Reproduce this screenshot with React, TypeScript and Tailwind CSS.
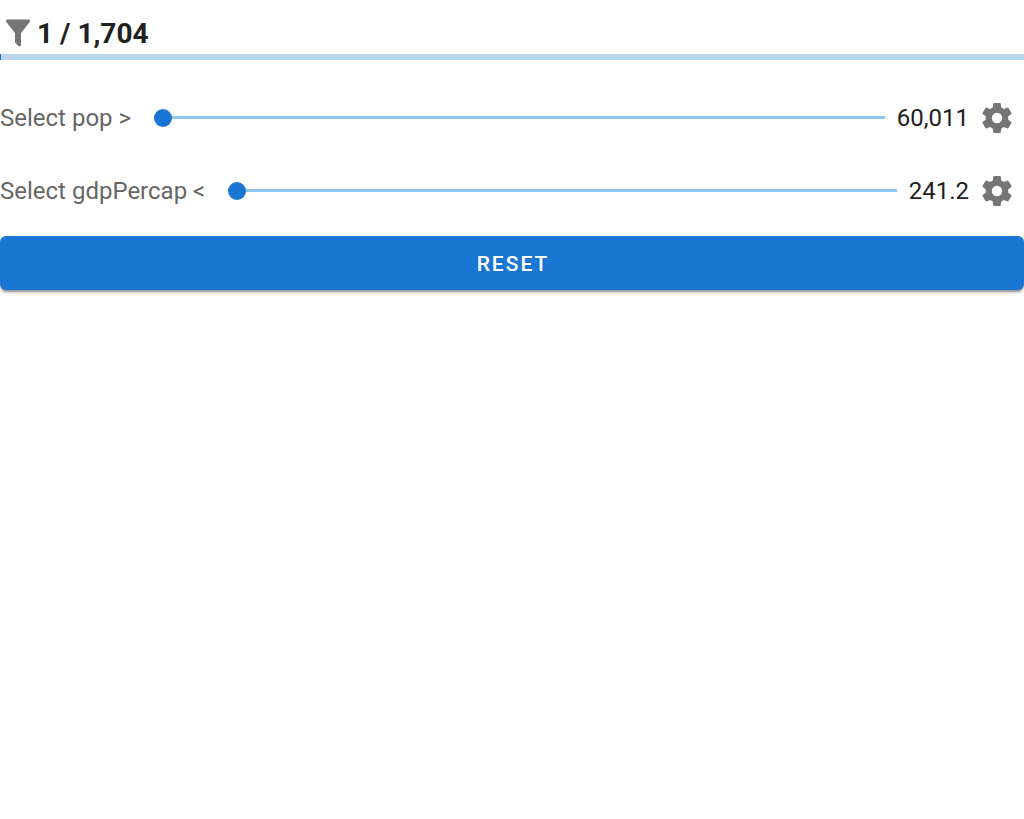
import { useState } from 'react'

const FILTER_PATH =
  'M14,12V19.88C14.04,20.18 13.94,20.5 13.71,20.71C13.32,21.1 12.69,21.1 12.3,20.71L10.29,18.7C10.06,18.47 9.96,18.16 10,17.87V12H9.97L4.21,4.62C3.87,4.19 3.95,3.56 4.38,3.22C4.57,3.08 4.78,3 5,3V3H19C19.22,3 19.43,3.08 19.62,3.22C20.05,3.56 20.13,4.19 19.79,4.62L14.03,12H14Z'

const COG_PATH =
  'M12,15.5A3.5,3.5 0 0,1 8.5,12A3.5,3.5 0 0,1 12,8.5A3.5,3.5 0 0,1 15.5,12A3.5,3.5 0 0,1 12,15.5M19.43,12.97C19.47,12.65 19.5,12.33 19.5,12C19.5,11.67 19.47,11.34 19.43,11L21.54,9.37C21.73,9.22 21.78,8.95 21.66,8.73L19.66,5.27C19.54,5.05 19.27,4.96 19.05,5.05L16.56,6.05C16.04,5.66 15.5,5.32 14.87,5.07L14.5,2.42C14.46,2.18 14.25,2 14,2H10C9.75,2 9.54,2.18 9.5,2.42L9.13,5.07C8.5,5.32 7.96,5.66 7.44,6.05L4.95,5.05C4.73,4.96 4.46,5.05 4.34,5.27L2.34,8.73C2.21,8.95 2.27,9.22 2.46,9.37L4.57,11C4.53,11.34 4.5,11.67 4.5,12C4.5,12.33 4.53,12.65 4.57,12.97L2.46,14.63C2.27,14.78 2.21,15.05 2.34,15.27L4.34,18.73C4.46,18.95 4.73,19.03 4.95,18.95L7.44,17.94C7.96,18.34 8.5,18.68 9.13,18.93L9.5,21.58C9.54,21.82 9.75,22 10,22H14C14.25,22 14.46,21.82 14.5,21.58L14.87,18.93C15.5,18.67 16.04,18.34 16.56,17.94L19.05,18.95C19.27,19.03 19.54,18.95 19.66,18.73L21.66,15.27C21.78,15.05 21.73,14.78 21.54,14.63L19.43,12.97Z'

const TOTAL = 1704
const MATCHED = 1

const filters = [
  { id: 'pop', label: 'Select pop >', min: 60011, max: 1318683096, step: 1 },
  { id: 'gdpPercap', label: 'Select gdpPercap <', min: 241.2, max: 113523.2, step: 0.1 },
]

const initialValues = filters.map((filter) => filter.min)

function Icon({ path }: { path: string }) {
  return (
    <svg viewBox="0 0 24 24" className="size-9 shrink-0 fill-[#757575]" aria-hidden="true">
      <path d={path} />
    </svg>
  )
}

export default function App() {
  const [values, setValues] = useState(initialValues)

  const handleChange = (index: number, value: number) => {
    setValues(values.map((v, i) => (i === index ? value : v)))
  }

  return (
    <main className="min-h-screen bg-white font-[Roboto,sans-serif] text-[#212121]">
      <div className="flex h-[54px] items-end pb-[3px]">
        <Icon path={FILTER_PATH} />
        <p className="pl-px text-[28px] leading-[34px] font-bold">
          {MATCHED.toLocaleString('en-US')} / {TOTAL.toLocaleString('en-US')}
        </p>
      </div>

      {/* Share of rows that pass the filters */}
      <div
        role="progressbar"
        aria-label="Filtered rows"
        aria-valuenow={MATCHED}
        aria-valuemax={TOTAL}
        className="h-1.5 bg-[#bad6ee]"
      >
        <div className="h-full bg-[#1976d2]" style={{ width: `${(MATCHED / TOTAL) * 100}%` }} />
      </div>

      <div className="pt-[21px] pb-[9px]">
        {filters.map((filter, index) => (
          <div key={filter.id} className="flex h-[73px] items-center pr-[9px]">
            <label htmlFor={filter.id} className="mr-[23px] text-2xl whitespace-nowrap text-[#666666]">
              {filter.label}
            </label>
            <input
              id={filter.id}
              type="range"
              min={filter.min}
              max={filter.max}
              step={filter.step}
              value={values[index]}
              onChange={(e) => handleChange(index, Number(e.target.value))}
              className="h-[37px] min-w-0 flex-1 cursor-pointer appearance-none bg-transparent [&::-webkit-slider-runnable-track]:h-[3px] [&::-webkit-slider-runnable-track]:bg-[#90c6f3] [&::-webkit-slider-thumb]:-mt-[7px] [&::-webkit-slider-thumb]:size-[18px] [&::-webkit-slider-thumb]:appearance-none [&::-webkit-slider-thumb]:rounded-full [&::-webkit-slider-thumb]:bg-[#1976d2]"
            />
            <output htmlFor={filter.id} className="mr-2.5 ml-3 text-2xl">
              {values[index].toLocaleString('en-US')}
            </output>
            <button type="button" aria-label={`Settings for ${filter.id}`} className="cursor-pointer">
              <Icon path={COG_PATH} />
            </button>
          </div>
        ))}
      </div>

      <button
        type="button"
        onClick={() => setValues(initialValues)}
        className="block h-[54px] w-full cursor-pointer rounded-md bg-[#1976d2] pt-[3px] pl-0.5 text-[21px] font-medium tracking-[2px] text-white uppercase shadow-[0_3px_2px_-1px_rgba(0,0,0,0.3),0_2px_5px_0_rgba(0,0,0,0.2)]"
      >
        Reset
      </button>
    </main>
  )
}
